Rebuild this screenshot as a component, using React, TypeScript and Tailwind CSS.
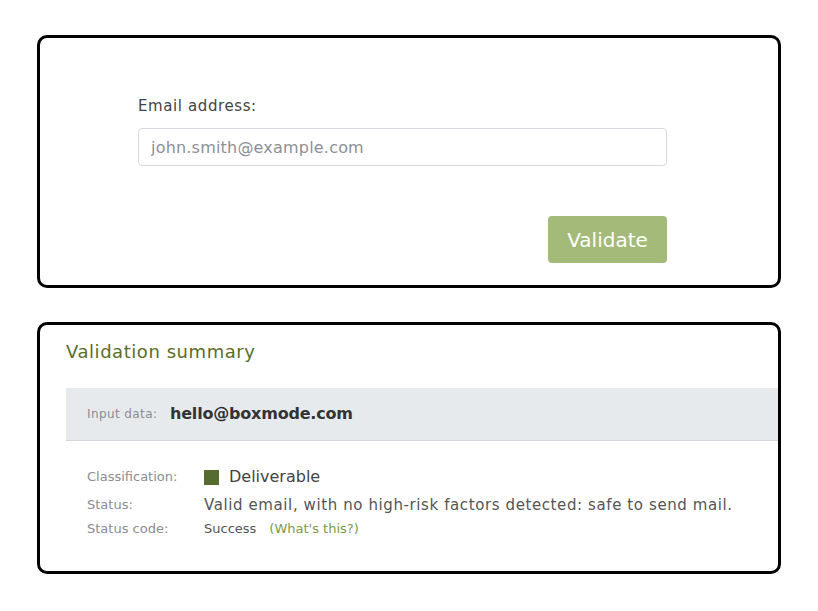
const font = { fontFamily: '"DejaVu Sans", "Noto Sans", sans-serif' };

const Row = ({ label, children, className }: { label: string; children: React.ReactNode; className?: string }) => (
  <div className={`flex items-center ${className ?? ''}`}>
    <div className="w-[117px] shrink-0 text-[13px] text-[#8a8d91]">{label}</div>
    <div className="flex items-center">{children}</div>
  </div>
);

export default function App() {
  return (
    <div className="min-h-[611px] bg-white pl-[37px] pt-[35px]" style={font}>
      {/* validatie-formulier */}
      <section className="h-[253px] w-[744px] rounded-[10px] border-[3px] border-black bg-white pl-[98px] pt-[57px]">
        <label className="block text-[15px] leading-[22px] tracking-[0.6px] text-[#444]">Email address:</label>
        <input
          type="text"
          placeholder="john.smith@example.com"
          className="mt-[11px] block h-[38px] w-[529px] rounded-[4px] border border-[#d5d9de] px-3 text-[16px] tracking-[0.2px] text-[#444] outline-none placeholder:text-[#8c9096]"
        />
        <div className="mt-[50px] flex w-[529px] justify-end">
          <button className="h-[47px] w-[119px] rounded-[4px] bg-[#a4ba78] text-[20px] text-white">Validate</button>
        </div>
      </section>

      {/* resultaat */}
      <section className="mt-[34px] h-[252px] w-[744px] rounded-[10px] border-[3px] border-black bg-white pl-[26px] pt-[14px]">
        <h2 className="text-[18px] leading-[26px] tracking-[0.55px] text-[#5a6d29]">Validation summary</h2>
        <div className="mt-[23px] flex h-[53px] items-center border-b border-[#d3d6da] bg-[#e7eaed] pl-[21px]">
          <span className="w-[83px] text-[12px] tracking-[0.4px] text-[#8a8d91]">Input data:</span>
          <span className="text-[16px] font-bold tracking-[-0.2px] text-[#333]">hello@boxmode.com</span>
        </div>
        <div className="pl-[21px] pt-[23px]">
          <Row label="Classification:" className="h-[26px]">
            <span className="mr-[10px] h-[15px] w-[15px] bg-[#556b2f]" />
            <span className="text-[16px] text-[#444]">Deliverable</span>
          </Row>
          <Row label="Status:" className="mt-[4px] h-[22px]">
            <span className="text-[15px] tracking-[0.6px] text-[#555]">
              Valid email, with no high-risk factors detected: safe to send mail.
            </span>
          </Row>
          <Row label="Status code:" className="mt-[3px] h-[20px]">
            <span className="text-[13px] text-[#555]">Success</span>
            <a href="#" className="ml-[13px] text-[13px] text-[#7a9a48]">(What's this?)</a>
          </Row>
        </div>
      </section>
    </div>
  );
}
